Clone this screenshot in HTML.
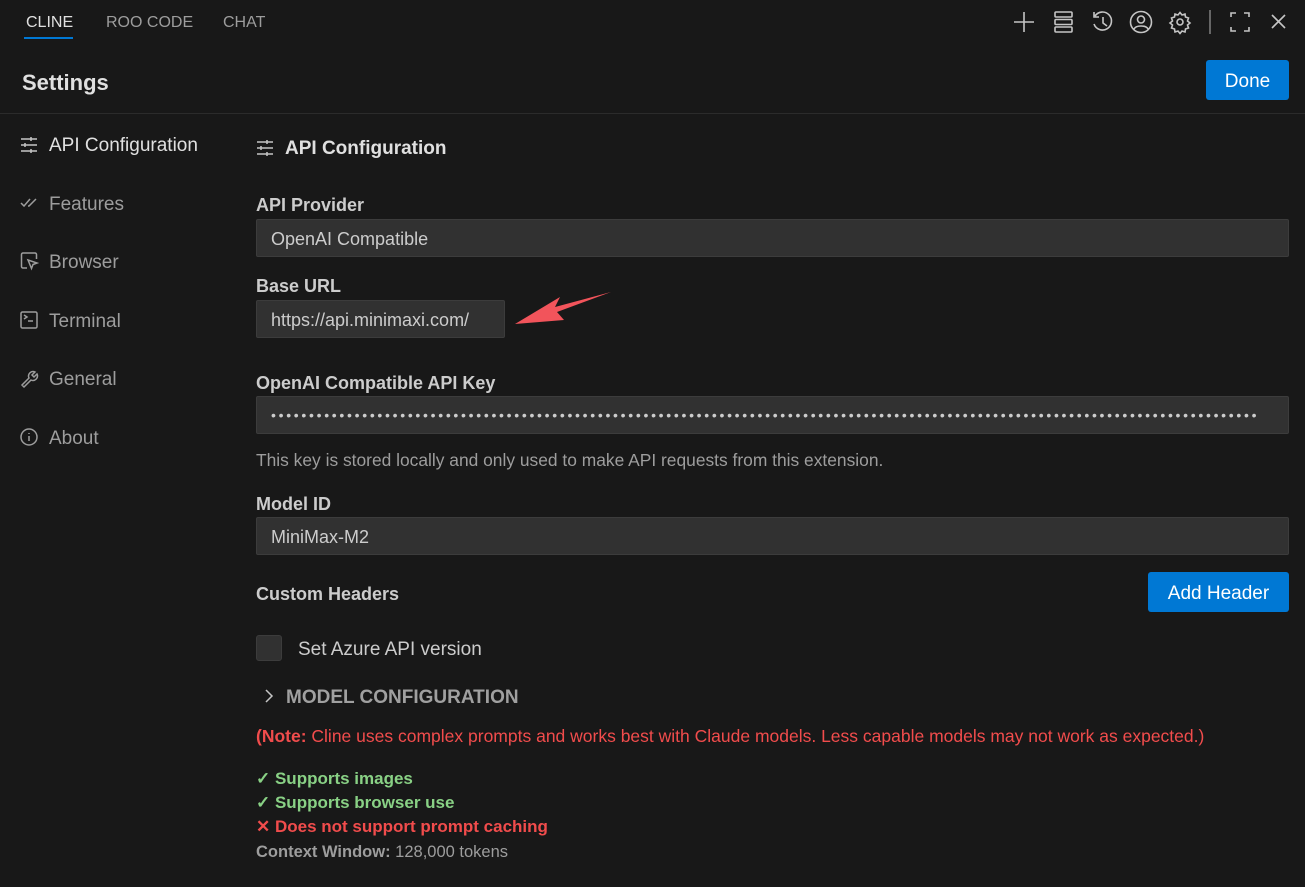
<!DOCTYPE html>
<html><head><meta charset="utf-8"><style>
*{margin:0;padding:0;box-sizing:border-box}
body{width:1305px;height:887px;background:#181818;color:#cccccc;font-family:"Liberation Sans",sans-serif;position:relative;overflow:hidden}
.a{position:absolute;white-space:nowrap}
.tab{font-size:16px;top:14px;color:#9d9d9d}
.lab{font-size:18px;font-weight:bold;color:#cccccc;left:256px}
.inp{position:absolute;left:256px;width:1033px;height:38px;background:#313131;border:1px solid #3c3c3c;border-radius:2px;font-size:18px;color:#cccccc;padding:9px 14px}
.side{font-size:19px;color:#9d9d9d;left:49px}
.ic{position:absolute;left:20px}
.btn{position:absolute;background:#0078d4;color:#fff;font-size:19px;border-radius:3px;text-align:center}
svg{overflow:visible}
</style></head><body>
<div class="a tab" style="left:26px;color:#e0e0e0">CLINE</div>
<div class="a" style="left:24px;top:37px;width:49px;height:2px;background:#0078d4"></div>
<div class="a tab" style="left:106px">ROO CODE</div>
<div class="a tab" style="left:223px">CHAT</div>

<svg class="a" style="left:1012px;top:10px" width="285" height="24" fill="none" stroke="#c5c5c5" stroke-width="1.6">
<path d="M2 12h20M12 2v20"/>
<rect x="43" y="2" width="17" height="5" rx="1"/><rect x="43" y="9.5" width="17" height="5" rx="1"/><rect x="43" y="17" width="17" height="5" rx="1"/>
<path d="M83 6a9 9 0 1 1-1 8M82 2v5h5M91 7v6l4 3"/>
<circle cx="129" cy="12" r="10.5"/><circle cx="129" cy="9.5" r="3.5"/><path d="M122 19c2-4 12-4 14 0"/>
<circle cx="168" cy="12" r="3"/><path d="M168 2.5l2 2.5 3-1 .5 3 3 1-1 3 2.5 2-2.5 2 1 3-3 1-.5 3-3-1-2 2.5-2-2.5-3 1-.5-3-3-1 1-3-2.5-2 2.5-2-1-3 3-1 .5-3 3 1z"/>
<path d="M198 0v24" stroke="#7a7a7a"/>
<path d="M219 7V3h5M232 3h5v4M237 17v4h-5M224 21h-5v-4"/>
<path d="M260 5l13 13M273 5l-13 13"/>
</svg>

<div class="a" style="left:22px;top:70px;font-size:22px;font-weight:bold;color:#e0e0e0">Settings</div>
<div class="btn" style="left:1206px;top:60px;width:83px;height:40px;line-height:43px">Done</div>
<div class="a" style="left:0;top:113px;width:1305px;height:1px;background:#2b2b2b"></div>

<svg class="ic" style="top:136px" width="18" height="18" stroke="#c5c5c5" stroke-width="1.5" fill="none"><path d="M1 3h16M1 9h16M1 15h16M11 1v4M5 7v4M11 13v4"/></svg>
<div class="a side" style="top:135px;color:#e0e0e0">API Configuration</div>
<svg class="ic" style="top:196px" width="18" height="14" stroke="#9d9d9d" stroke-width="1.5" fill="none"><path d="M1 7l3 3 6-7M8 10l1 0 7-7"/></svg>
<div class="a side" style="top:194px">Features</div>
<svg class="ic" style="top:252px" width="18" height="18" stroke="#9d9d9d" stroke-width="1.5" fill="none"><path d="M7 16H3a1.5 1.5 0 0 1-1.5-1.5v-12A1.5 1.5 0 0 1 3 1h12a1.5 1.5 0 0 1 1.5 1.5V7M8 8l9 3-4 1.5-1.5 4z"/></svg>
<div class="a side" style="top:252px">Browser</div>
<svg class="ic" style="top:311px" width="18" height="18" stroke="#9d9d9d" stroke-width="1.5" fill="none"><rect x="1" y="1" width="16" height="16" rx="1.5"/><path d="M4 4l3 2-3 2M8 10h5"/></svg>
<div class="a side" style="top:311px">Terminal</div>
<svg class="ic" style="top:369px" width="18" height="18" stroke="#9d9d9d" stroke-width="1.5" fill="none"><path d="M2 16l7-7a4.5 4.5 0 0 1 6-6l-3 3 2 2 3-3a4.5 4.5 0 0 1-6 6l-7 7z"/></svg>
<div class="a side" style="top:369px">General</div>
<svg class="ic" style="top:428px" width="18" height="18" stroke="#9d9d9d" stroke-width="1.5" fill="none"><circle cx="9" cy="9" r="8"/><path d="M9 8v5M9 5v1"/></svg>
<div class="a side" style="top:428px">About</div>

<svg class="a" style="left:256px;top:139px" width="18" height="18" stroke="#c5c5c5" stroke-width="1.5" fill="none"><path d="M1 3h16M1 9h16M1 15h16M11 1v4M5 7v4M11 13v4"/></svg>
<div class="a" style="left:285px;top:138px;font-size:19px;font-weight:bold;color:#e0e0e0">API Configuration</div>

<div class="a lab" style="top:195px">API Provider</div>
<div class="inp" style="top:219px">OpenAI Compatible</div>
<div class="a lab" style="top:276px">Base URL</div>
<div class="inp" style="top:300px;width:249px">https://api.minimaxi.com/</div>
<svg class="a" style="left:512px;top:290px" width="105" height="40"><path d="M99 2L43 17 48 7 3 34 52 30 45 22z" fill="#f2545b"/></svg>
<div class="a lab" style="top:373px">OpenAI Compatible API Key</div>
<div class="inp" style="top:396px;overflow:hidden;font-size:14px;letter-spacing:2.7px;padding-top:10px">••••••••••••••••••••••••••••••••••••••••••••••••••••••••••••••••••••••••••••••••••••••••••••••••••••••••••••••••••••••••••••••••••</div>
<div class="a" style="left:256px;top:450px;font-size:17.4px;color:#9d9d9d">This key is stored locally and only used to make API requests from this extension.</div>
<div class="a lab" style="top:494px">Model ID</div>
<div class="inp" style="top:517px">MiniMax-M2</div>
<div class="a lab" style="top:584px">Custom Headers</div>
<div class="btn" style="left:1148px;top:572px;width:141px;height:40px;line-height:43px">Add Header</div>
<div class="a" style="left:256px;top:635px;width:26px;height:26px;background:#313131;border:1px solid #3c3c3c;border-radius:3px"></div>
<div class="a" style="left:298px;top:639px;font-size:19px;color:#cccccc">Set Azure API version</div>
<svg class="a" style="left:264px;top:688px" width="10" height="16" stroke="#c5c5c5" stroke-width="1.5" fill="none"><path d="M2 2l6 6-6 6"/></svg>
<div class="a" style="left:286px;top:687px;font-size:19px;font-weight:bold;color:#a0a0a0">MODEL CONFIGURATION</div>
<div class="a" style="left:256px;top:726px;font-size:17.5px;color:#f14c4c"><b>(Note:</b> Cline uses complex prompts and works best with Claude models. Less capable models may not work as expected.)</div>
<div class="a" style="left:256px;top:769px;font-size:17px;font-weight:bold;color:#89d185">✓ Supports images</div>
<div class="a" style="left:256px;top:793px;font-size:17px;font-weight:bold;color:#89d185">✓ Supports browser use</div>
<div class="a" style="left:256px;top:817px;font-size:17px;font-weight:bold;color:#f14c4c">✕ Does not support prompt caching</div>
<div class="a" style="left:256px;top:843px;font-size:16.5px;color:#9d9d9d"><b>Context Window:</b> 128,000 tokens</div>
</body></html>
